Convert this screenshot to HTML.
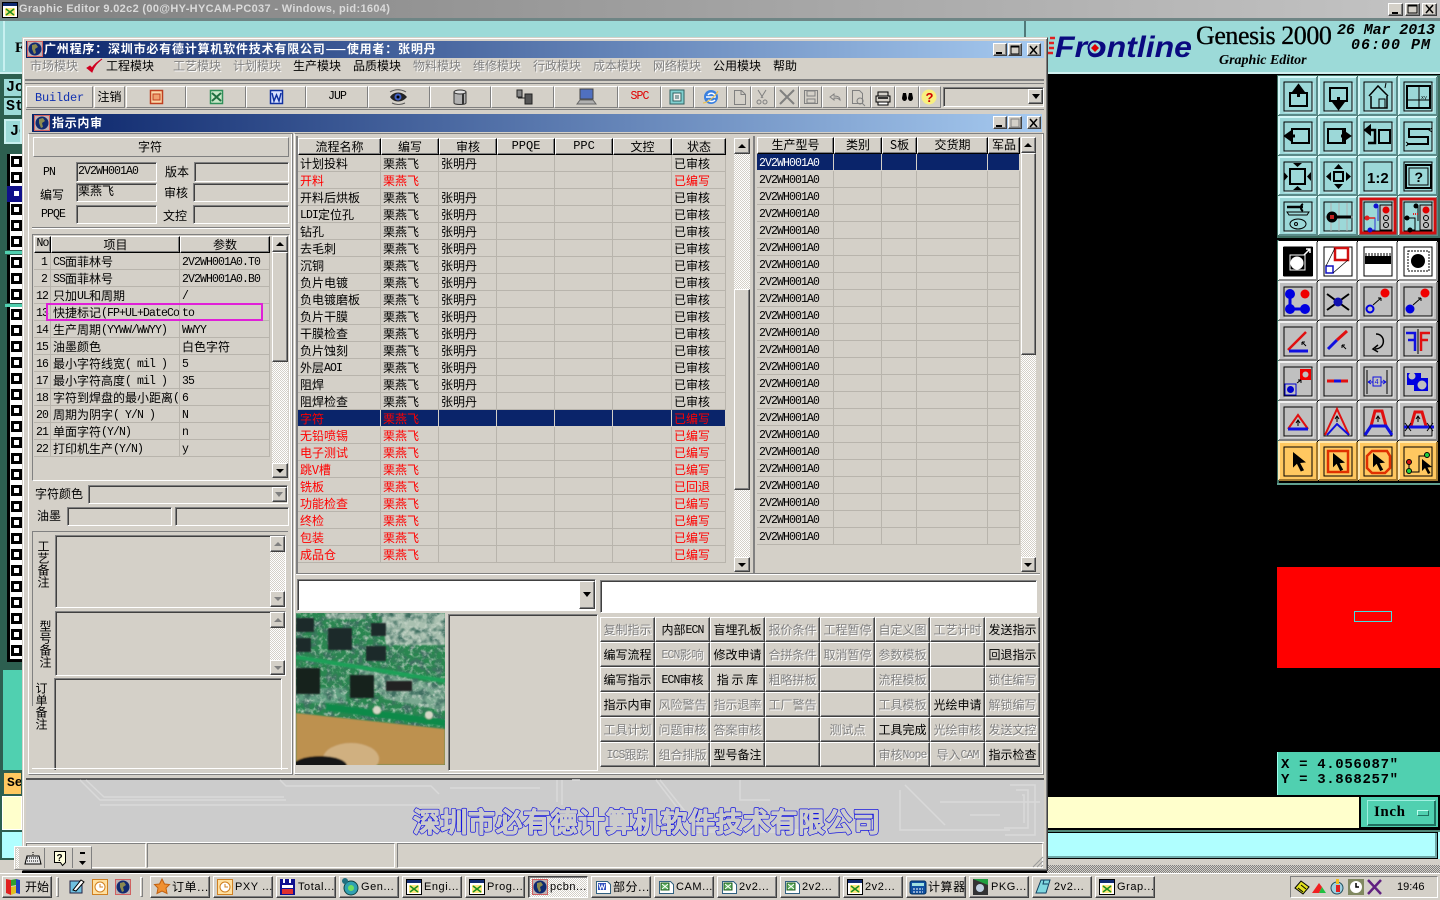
<!DOCTYPE html>
<html><head><meta charset="utf-8"><title>Graphic Editor</title>
<style>
*{box-sizing:border-box;margin:0;padding:0}
html,body{width:1440px;height:900px;overflow:hidden}
body{position:relative;background:#000;font:12px/14px "WenQuanYi Zen Hei","Noto Sans CJK SC",sans-serif;color:#000}
div{position:absolute;white-space:nowrap}
.f{background:#d4d0c8}
.r{background:#d4d0c8;border:1px solid;border-color:#fff #404040 #404040 #fff;box-shadow:inset -1px -1px #808080}
.s{border:1px solid;border-color:#808080 #fff #fff #808080;box-shadow:inset 1px 1px #404040}
.g{color:#808080;text-shadow:1px 1px #fff}
.m{font:11.5px/14px "Liberation Mono",monospace;letter-spacing:-.9px}
.c{display:flex;align-items:center;justify-content:center}
.h{background:repeating-conic-gradient(#fff 0 25%,#d4d0c8 0 50%) 0 0/2px 2px}
table{position:absolute;border-collapse:separate;border-spacing:0;table-layout:fixed}
td,th{height:17px;max-height:17px;overflow:hidden;white-space:nowrap;font-weight:normal;text-align:left;padding:1px 0 0 2px;border-right:1px solid #b8b4ac;border-bottom:1px solid #b8b4ac;line-height:15px;vertical-align:top}
th{text-align:center;padding:0;background:#d4d0c8;border:1px solid;border-color:#fff #000 #000 #fff;box-shadow:inset -1px -1px #808080}
td.m,table.m td{padding-top:4px;font:11.5px/12px "Liberation Mono",monospace;letter-spacing:-.9px}
td span.m{vertical-align:top;line-height:15px;position:relative;top:1px}
.red td{color:#f00}
.sel td{background:#0a246a;color:#f00;border-color:#d4d0c8}
table.m .w td{color:#fff}
.kg{left:600px;top:617px;display:grid;grid-template-columns:repeat(8,55px);grid-auto-rows:25px;width:440px}
.kg p{background:#d4d0c8;border:1px solid;border-color:#fff #404040 #404040 #fff;box-shadow:inset -1px -1px #808080;display:block;text-align:center;line-height:24px;white-space:nowrap;overflow:hidden;font-size:12px}
.kg p .m{vertical-align:top;line-height:25px}
.tb{top:876px;width:60px;height:22px;background:#d4d0c8;border:1px solid;border-color:#fff #404040 #404040 #fff;box-shadow:inset -1px -1px #808080;padding:3px 0 0 21px;font:11px/14px "Liberation Sans","WenQuanYi Zen Hei","Noto Sans CJK SC",sans-serif;letter-spacing:.55px;overflow:hidden}
.sq{left:7px;width:15px;height:16px;background:#fff;border-left:3px solid #000}
.sq::after{content:"";position:absolute;left:1px;top:2px;width:5px;height:5px;border:3px solid #000;background:#fff}
.sb{border-left-color:#10108a;background:#10108a}
.sb::after{border-color:#10108a}
.v{writing-mode:vertical-rl;white-space:nowrap;line-height:13px}
.tl{box-shadow:none;border-color:#fff #808080 #808080 #fff}
</style></head><body>

<!-- top title -->
<div style="left:0;top:0;width:1440px;height:18px;background:linear-gradient(90deg,#808080,#c4c4c4)"></div>
<div style="left:19px;top:2px;font:bold 11px/14px 'Liberation Sans',sans-serif;color:#dadada;letter-spacing:.33px">Graphic Editor 9.02c2 (00@HY-HYCAM-PC037 - Windows, pid:1604)</div>
<div class="r c" style="left:1388px;top:3px;width:15px;height:13px"></div>
<div class="r c" style="left:1405px;top:3px;width:15px;height:13px"></div>
<div class="r c" style="left:1422px;top:3px;width:15px;height:13px"></div>
<div style="left:0;top:18px;width:1440px;height:3px;background:#6f8585"></div>
<!-- teal header -->
<div style="left:0;top:21px;width:1440px;height:52px;background:#9cdad8"></div>
<div style="left:1024px;top:21px;width:2px;height:20px;background:#507878"></div>
<div style="left:0;top:72px;width:1440px;height:2px;background:#d0f0f0"></div>
<div style="left:3px;top:21px;width:2px;height:50px;background:#c8f0f0"></div>
<div style="left:15px;top:38px;font:bold 15px/20px 'Liberation Serif',serif">F</div>
<div style="left:0;top:74px;width:22px;height:800px;background:#2d5f50"></div>

<!-- left strip -->
<div style="left:3px;top:78px;width:19px;height:19px;background:#9cdad8;border:1px solid #2d5f50;font:bold 15px/17px 'Liberation Mono',monospace;overflow:hidden;padding-left:2px">Jo</div>
<div style="left:3px;top:97px;width:19px;height:19px;background:#9cdad8;border:1px solid #2d5f50;font:bold 15px/17px 'Liberation Mono',monospace;overflow:hidden;padding-left:2px">St</div>
<div style="left:4px;top:119px;width:18px;height:25px;background:#9cdad8;border:2px solid #c8f0f0;font:bold 15px/21px 'Liberation Mono',monospace;overflow:hidden;padding-left:4px">Jo</div>
<div class="sq" style="top:154px"></div><div class="sq" style="top:170px"></div><div class="sq sb" style="top:186px"></div><div class="sq" style="top:202px"></div><div class="sq" style="top:218px"></div><div class="sq" style="top:234px"></div>
<div style="left:5px;top:251px;width:17px;height:3px;background:#50d0b0"></div>
<div class="sq" style="top:255px"></div><div class="sq" style="top:271px"></div><div class="sq" style="top:287px"></div>
<div style="left:5px;top:304px;width:17px;height:3px;background:#50d0b0"></div>
<div class="sq" style="top:307px"></div><div class="sq" style="top:323px"></div><div class="sq" style="top:339px"></div><div class="sq" style="top:355px"></div><div class="sq" style="top:371px"></div><div class="sq" style="top:387px"></div><div class="sq" style="top:403px"></div><div class="sq" style="top:419px"></div><div class="sq" style="top:435px"></div><div class="sq" style="top:451px"></div><div class="sq" style="top:467px"></div><div class="sq" style="top:483px"></div><div class="sq" style="top:499px"></div><div class="sq" style="top:515px"></div><div class="sq" style="top:531px"></div><div class="sq" style="top:547px"></div><div class="sq" style="top:563px"></div><div class="sq" style="top:579px"></div><div class="sq" style="top:595px"></div><div class="sq" style="top:611px"></div><div class="sq" style="top:627px"></div><div class="sq" style="top:643px"></div>
<div style="left:7px;top:659px;width:15px;height:3px;background:#000"></div>
<div style="left:3px;top:670px;width:19px;height:100px;background:#50d0b0"></div>
<div style="left:3px;top:772px;width:19px;height:23px;background:#ffc860;border:1px solid #306050;font:bold 13px/20px 'Liberation Mono',monospace;padding-left:3px;overflow:hidden">Se</div>
<div style="left:2px;top:796px;width:20px;height:34px;background:#ffffcc;border:1px solid #fff"></div>
<div style="left:2px;top:832px;width:20px;height:26px;background:#b0ffff"></div>
<div style="left:0;top:860px;width:22px;height:14px;background:#d4d0c8"></div>

<!-- right region -->
<div style="left:1047px;top:74px;width:393px;height:723px;background:#000"></div>
<div style="left:1277px;top:75px;width:163px;height:163px;background:#3f6f62"></div>
<div style="left:1277px;top:240px;width:2px;height:244px;background:#3f6f62"></div>
<div style="left:1277px;top:483px;width:163px;height:2px;background:#60a090"></div>
<div style="left:1277px;top:567px;width:163px;height:101px;background:#f00"></div>
<div style="left:1354px;top:611px;width:38px;height:11px;border:1px solid #40e0e0"></div>
<div style="left:1277px;top:752px;width:163px;height:43px;background:#50d0b0;border-left:1px solid #9fe"></div>
<div style="left:1281px;top:758px;font:bold 14px/15px 'Liberation Mono',monospace;letter-spacing:.65px">X = 4.056087"<br>Y = 3.868257"</div>
<div style="left:1047px;top:797px;width:312px;height:31px;background:#ffffcc"></div>
<div style="left:1359px;top:795px;width:81px;height:34px;background:#50d0b0;border:2px solid #000"></div>
<div style="left:1367px;top:800px;width:69px;height:26px;background:#50d0b0;border:1px solid;border-color:#a0f0e0 #207060 #207060 #a0f0e0;box-shadow:inset -1px -1px #207060"></div>
<div style="left:1374px;top:804px;font:bold 15px/16px 'Liberation Serif',serif;letter-spacing:.6px">Inch</div>
<div style="left:1417px;top:810px;width:12px;height:6px;background:#50d0b0;border:1px solid;border-color:#c0fff0 #207060 #207060 #c0fff0"></div>
<div style="left:1047px;top:828px;width:393px;height:2px;background:#000"></div>
<div style="left:1047px;top:830px;width:393px;height:2px;background:#508878"></div>
<div style="left:1047px;top:832px;width:391px;height:27px;background:#b0ffff;border:1px solid #000;border-left:0;box-shadow:inset -2px -2px #70a8a8"></div>
<div style="left:1438px;top:832px;width:2px;height:27px;background:#b0ffff"></div>
<div style="left:1047px;top:859px;width:393px;height:7px;background:#d4d0c8"></div>
<div class="h" style="left:1047px;top:865px;width:393px;height:8px;background:repeating-conic-gradient(#808080 0 25%,#d4d0c8 0 50%) 0 0/2px 2px"></div>

<div style="left:1196px;top:21px;font:26px/30px 'Liberation Serif',serif;letter-spacing:-.45px;-webkit-text-stroke:.3px #000">Genesis 2000</div>
<div style="left:1219px;top:53px;font:italic bold 14px/16px 'Liberation Serif',serif">Graphic Editor</div>
<div style="left:1337px;top:23px;font:italic bold 15px/16px 'Liberation Mono',monospace;letter-spacing:-.1px">26 Mar 2013</div>
<div style="left:1351px;top:38px;font:italic bold 15px/16px 'Liberation Mono',monospace;letter-spacing:1px">06:00 PM</div>

<!-- main window -->
<div class="f" style="left:22px;top:37px;width:1026px;height:834px;border:1px solid;border-color:#d4d0c8 #404040 #404040 #d4d0c8;box-shadow:inset 1px 1px #fff,inset -1px -1px #808080"></div>
<div style="left:26px;top:41px;width:1018px;height:17px;background:linear-gradient(90deg,#0a246a,#a6caf0)"></div>
<div style="left:44px;top:42px;color:#fff;font-weight:bold;letter-spacing:.8px;font-size:12px">广州程序：深圳市必有德计算机软件技术有限公司——使用者：张明丹</div>
<div class="r" style="left:993px;top:43px;width:14px;height:13px"></div><div class="r" style="left:1008px;top:43px;width:14px;height:13px"></div><div class="r" style="left:1027px;top:43px;width:14px;height:13px"></div>
<!-- menu -->
<div class="g" style="left:30px;top:59px">市场模块</div>
<div style="left:106px;top:59px">工程模块</div>
<div class="g" style="left:173px;top:59px">工艺模块</div>
<div class="g" style="left:233px;top:59px">计划模块</div>
<div style="left:293px;top:59px">生产模块</div>
<div style="left:353px;top:59px">品质模块</div>
<div class="g" style="left:413px;top:59px">物料模块</div>
<div class="g" style="left:473px;top:59px">维修模块</div>
<div class="g" style="left:533px;top:59px">行政模块</div>
<div class="g" style="left:593px;top:59px">成本模块</div>
<div class="g" style="left:653px;top:59px">网络模块</div>
<div style="left:713px;top:59px">公用模块</div>
<div style="left:773px;top:59px">帮助</div>
<div style="left:25px;top:79px;width:1019px;height:5px;border-top:2px solid #808080;border-bottom:1px solid #808080;background:#d4d0c8"></div>
<!-- toolbar -->
<div class="r tl" style="left:26px;top:86px;width:67px;height:22px"></div>
<div class="m" style="left:35px;top:91px;color:#1030b0;font-size:12px;letter-spacing:-.2px">Builder</div>
<div class="r c tl" style="left:94px;top:86px;width:31px;height:22px">注销</div>
<div class="r tl" style="left:126px;top:86px;width:60px;height:22px"></div>
<div class="r tl" style="left:186px;top:86px;width:60px;height:22px"></div>
<div class="r tl" style="left:246px;top:86px;width:60px;height:22px"></div>
<div class="r c m tl" style="left:306px;top:86px;width:62px;height:22px">JUP</div>
<div class="r tl" style="left:368px;top:86px;width:62px;height:22px"></div>
<div class="r tl" style="left:430px;top:86px;width:61px;height:22px"></div>
<div class="r tl" style="left:491px;top:86px;width:63px;height:22px"></div>
<div class="r tl" style="left:554px;top:86px;width:64px;height:22px"></div>
<div class="r c m tl" style="left:618px;top:86px;width:43px;height:22px;color:#e00000">SPC</div>
<div class="r tl" style="left:661px;top:86px;width:33px;height:22px"></div>
<div class="r tl" style="left:694px;top:86px;width:33px;height:22px"></div>
<div class="r tl" style="left:727px;top:86px;width:24px;height:22px"></div>
<div class="r tl" style="left:751px;top:86px;width:24px;height:22px"></div>
<div class="r tl" style="left:775px;top:86px;width:24px;height:22px"></div>
<div class="r tl" style="left:799px;top:86px;width:23px;height:22px"></div>
<div class="r tl" style="left:822px;top:86px;width:25px;height:22px"></div>
<div class="r tl" style="left:847px;top:86px;width:24px;height:22px"></div>
<div class="r tl" style="left:871px;top:86px;width:24px;height:22px"></div>
<div class="r tl" style="left:895px;top:86px;width:24px;height:22px"></div>
<div class="r tl" style="left:919px;top:86px;width:22px;height:22px"></div>
<div class="s" style="left:943px;top:87px;width:101px;height:20px"></div>
<div class="r" style="left:1028px;top:89px;width:15px;height:15px"></div>
<!-- child window -->
<div style="left:26px;top:109px;width:1018px;height:1px;background:#808080"></div>
<div style="left:32px;top:114px;width:1010px;height:18px;background:linear-gradient(90deg,#0a246a,#a6caf0)"></div>
<div style="left:52px;top:116px;color:#fff;font-weight:bold;letter-spacing:.7px">指示内审</div>
<div class="r" style="left:993px;top:116px;width:14px;height:13px"></div><div class="r" style="left:1008px;top:116px;width:14px;height:13px"></div><div class="r" style="left:1027px;top:116px;width:14px;height:13px"></div>

<!-- left panel -->
<div style="left:28px;top:133px;width:265px;height:642px;border:1px solid;border-color:#808080 #808080 #808080 #fff;box-shadow:inset -1px -1px #fff"></div>
<div class="r c tl" style="left:33px;top:137px;width:256px;height:20px;padding-right:22px">字符</div>
<div class="s" style="left:76px;top:162px;width:81px;height:20px"></div>
<div class="s" style="left:76px;top:183px;width:81px;height:19px"></div>
<div class="s" style="left:76px;top:205px;width:81px;height:19px"></div>
<div class="s" style="left:194px;top:162px;width:95px;height:20px"></div>
<div class="s" style="left:193px;top:183px;width:96px;height:19px"></div>
<div class="s" style="left:193px;top:205px;width:96px;height:19px"></div>
<div class="m" style="left:43px;top:166px">PN</div>
<div style="left:40px;top:188px">编写</div>
<div class="m" style="left:41px;top:208px">PPQE</div>
<div style="left:165px;top:165px">版本</div>
<div style="left:164px;top:186px">审核</div>
<div style="left:163px;top:209px">文控</div>
<div class="m" style="left:78px;top:165px">2V2WH001A0</div>
<div style="left:78px;top:184px">栗燕飞</div>
<div style="left:32px;top:227px;width:258px;height:2px;border-top:1px solid #808080;border-bottom:1px solid #fff"></div>
<div style="left:32px;top:234px;width:258px;height:247px;border:1px solid;border-color:#808080 #fff #fff #808080"></div>

<table style="left:34px;top:236px;width:236px">
<col width="17"><col width="129"><col width="90">
<tr><th class="m">No</th><th>项目</th><th>参数</th></tr>
<tr><td style="text-align:right;padding-right:3px" class="m">1</td><td><span class="m">CS</span>面菲林号</td><td class="m">2V2WH001A0.T0</td></tr>
<tr><td style="text-align:right;padding-right:3px" class="m">2</td><td><span class="m">SS</span>面菲林号</td><td class="m">2V2WH001A0.B0</td></tr>
<tr><td class="m">12</td><td>只加<span class="m">UL</span>和周期</td><td class="m">/</td></tr>
<tr><td class="m">13</td><td>快捷标记<span class="m">(FP+UL+DateCo</span></td><td class="m">to</td></tr>
<tr><td class="m">14</td><td>生产周期<span class="m">(YYWW/WWYY)</span></td><td class="m">WWYY</td></tr>
<tr><td class="m">15</td><td>油墨颜色</td><td>白色字符</td></tr>
<tr><td class="m">16</td><td>最小字符线宽<span class="m">( mil )</span></td><td class="m">5</td></tr>
<tr><td class="m">17</td><td>最小字符高度<span class="m">( mil )</span></td><td class="m">35</td></tr>
<tr><td class="m">18</td><td>字符到焊盘的最小距离<span class="m">(</span></td><td class="m">6</td></tr>
<tr><td class="m">20</td><td>周期为阴字<span class="m">( Y/N )</span></td><td class="m">N</td></tr>
<tr><td class="m">21</td><td>单面字符<span class="m">(Y/N)</span></td><td class="m">n</td></tr>
<tr><td class="m">22</td><td>打印机生产<span class="m">(Y/N)</span></td><td class="m">y</td></tr>
</table>
<div class="h" style="left:272px;top:236px;width:16px;height:242px"></div>
<div class="r" style="left:272px;top:236px;width:16px;height:16px"></div>
<div class="r" style="left:272px;top:252px;width:16px;height:110px"></div>
<div class="r" style="left:272px;top:463px;width:16px;height:15px"></div>

<div style="left:35px;top:487px">字符颜色</div>
<div class="s" style="left:88px;top:485px;width:200px;height:19px"></div>
<div class="r" style="left:272px;top:487px;width:15px;height:15px"></div>
<div style="left:37px;top:509px">油墨</div>
<div class="s" style="left:67px;top:507px;width:105px;height:19px"></div>
<div class="s" style="left:175px;top:507px;width:114px;height:19px"></div>
<div style="left:32px;top:531px;width:256px;height:1px;background:#808080"></div>
<div style="left:32px;top:531px;width:1px;height:175px;background:#808080"></div>

<div class="v" style="left:37px;top:540px">工艺备注</div>
<div class="s" style="left:55px;top:535px;width:231px;height:73px"></div>
<div class="h" style="left:270px;top:536px;width:15px;height:71px"></div>
<div class="r" style="left:270px;top:536px;width:15px;height:16px"></div>
<div class="r" style="left:270px;top:591px;width:15px;height:16px"></div>

<div class="v" style="left:39px;top:620px">型号备注</div>
<div class="s" style="left:55px;top:611px;width:231px;height:65px"></div>
<div class="h" style="left:270px;top:612px;width:15px;height:63px"></div>
<div class="r" style="left:270px;top:612px;width:15px;height:16px"></div>
<div class="r" style="left:270px;top:660px;width:15px;height:15px"></div>

<div class="v" style="left:35px;top:682px">订单备注</div>
<div class="s" style="left:54px;top:678px;width:228px;height:92px;border-bottom:0"></div>
<div style="left:32px;top:768px;width:256px;height:1px;background:#fff"></div>

<!-- process table -->
<div style="left:294px;top:133px;width:750px;height:642px;border:1px solid;border-color:#808080 #808080 #808080 #fff;box-shadow:inset -1px -1px #fff"></div>
<div style="left:296px;top:136px;width:2px;height:437px;background:#808080"></div>
<table style="left:298px;top:138px;width:428px">
<col width="83"><col width="58"><col width="58"><col width="58"><col width="58"><col width="59"><col width="54">
<tr><th>流程名称</th><th>编写</th><th>审核</th><th class="m" style="font-size:12px;letter-spacing:0">PPQE</th><th class="m" style="font-size:12px;letter-spacing:0">PPC</th><th>文控</th><th>状态</th></tr>
<tr><td>计划投料</td><td>栗燕飞</td><td>张明丹</td><td></td><td></td><td></td><td>已审核</td></tr>
<tr class="red"><td>开料</td><td>栗燕飞</td><td></td><td></td><td></td><td></td><td>已编写</td></tr>
<tr><td>开料后烘板</td><td>栗燕飞</td><td>张明丹</td><td></td><td></td><td></td><td>已审核</td></tr>
<tr><td><span class="m">LDI</span>定位孔</td><td>栗燕飞</td><td>张明丹</td><td></td><td></td><td></td><td>已审核</td></tr>
<tr><td>钻孔</td><td>栗燕飞</td><td>张明丹</td><td></td><td></td><td></td><td>已审核</td></tr>
<tr><td>去毛刺</td><td>栗燕飞</td><td>张明丹</td><td></td><td></td><td></td><td>已审核</td></tr>
<tr><td>沉铜</td><td>栗燕飞</td><td>张明丹</td><td></td><td></td><td></td><td>已审核</td></tr>
<tr><td>负片电镀</td><td>栗燕飞</td><td>张明丹</td><td></td><td></td><td></td><td>已审核</td></tr>
<tr><td>负电镀磨板</td><td>栗燕飞</td><td>张明丹</td><td></td><td></td><td></td><td>已审核</td></tr>
<tr><td>负片干膜</td><td>栗燕飞</td><td>张明丹</td><td></td><td></td><td></td><td>已审核</td></tr>
<tr><td>干膜检查</td><td>栗燕飞</td><td>张明丹</td><td></td><td></td><td></td><td>已审核</td></tr>
<tr><td>负片蚀刻</td><td>栗燕飞</td><td>张明丹</td><td></td><td></td><td></td><td>已审核</td></tr>
<tr><td>外层<span class="m">AOI</span></td><td>栗燕飞</td><td>张明丹</td><td></td><td></td><td></td><td>已审核</td></tr>
<tr><td>阻焊</td><td>栗燕飞</td><td>张明丹</td><td></td><td></td><td></td><td>已审核</td></tr>
<tr><td>阻焊检查</td><td>栗燕飞</td><td>张明丹</td><td></td><td></td><td></td><td>已审核</td></tr>
<tr class="sel"><td>字符</td><td>栗燕飞</td><td></td><td></td><td></td><td></td><td>已编写</td></tr>
<tr class="red"><td>无铅喷锡</td><td>栗燕飞</td><td></td><td></td><td></td><td></td><td>已编写</td></tr>
<tr class="red"><td>电子测试</td><td>栗燕飞</td><td></td><td></td><td></td><td></td><td>已编写</td></tr>
<tr class="red"><td>跳V槽</td><td>栗燕飞</td><td></td><td></td><td></td><td></td><td>已编写</td></tr>
<tr class="red"><td>铣板</td><td>栗燕飞</td><td></td><td></td><td></td><td></td><td>已回退</td></tr>
<tr class="red"><td>功能检查</td><td>栗燕飞</td><td></td><td></td><td></td><td></td><td>已编写</td></tr>
<tr class="red"><td>终检</td><td>栗燕飞</td><td></td><td></td><td></td><td></td><td>已编写</td></tr>
<tr class="red"><td>包装</td><td>栗燕飞</td><td></td><td></td><td></td><td></td><td>已编写</td></tr>
<tr class="red"><td>成品仓</td><td>栗燕飞</td><td></td><td></td><td></td><td></td><td>已编写</td></tr>
</table>
<div class="h" style="left:734px;top:138px;width:16px;height:433px"></div>
<div class="r" style="left:734px;top:138px;width:16px;height:16px"></div>
<div class="r" style="left:734px;top:289px;width:16px;height:201px"></div>
<div class="r" style="left:734px;top:557px;width:16px;height:15px"></div>
<div style="left:753px;top:136px;width:2px;height:437px;background:#808080"></div>
<div style="left:296px;top:573px;width:744px;height:2px;border-top:1px solid #808080;border-bottom:1px solid #fff"></div>

<table style="left:757px;top:137px;width:263px" class="m">
<col width="77"><col width="48"><col width="35"><col width="71"><col width="32">
<tr><th style="font:12px/14px 'WenQuanYi Zen Hei','Noto Sans CJK SC',sans-serif;letter-spacing:0">生产型号</th><th style="font:12px/14px 'WenQuanYi Zen Hei','Noto Sans CJK SC',sans-serif;letter-spacing:0">类别</th><th style="font:12px/14px 'WenQuanYi Zen Hei','Noto Sans CJK SC',sans-serif;letter-spacing:0">S板</th><th style="font:12px/14px 'WenQuanYi Zen Hei','Noto Sans CJK SC',sans-serif;letter-spacing:0">交货期</th><th style="font:12px/14px 'WenQuanYi Zen Hei','Noto Sans CJK SC',sans-serif;letter-spacing:0">军品</th></tr>
<tr class="sel w"><td>2V2WH001A0</td><td></td><td></td><td></td><td></td></tr>
<tr><td>2V2WH001A0</td><td></td><td></td><td></td><td></td></tr>
<tr><td>2V2WH001A0</td><td></td><td></td><td></td><td></td></tr>
<tr><td>2V2WH001A0</td><td></td><td></td><td></td><td></td></tr>
<tr><td>2V2WH001A0</td><td></td><td></td><td></td><td></td></tr>
<tr><td>2V2WH001A0</td><td></td><td></td><td></td><td></td></tr>
<tr><td>2V2WH001A0</td><td></td><td></td><td></td><td></td></tr>
<tr><td>2V2WH001A0</td><td></td><td></td><td></td><td></td></tr>
<tr><td>2V2WH001A0</td><td></td><td></td><td></td><td></td></tr>
<tr><td>2V2WH001A0</td><td></td><td></td><td></td><td></td></tr>
<tr><td>2V2WH001A0</td><td></td><td></td><td></td><td></td></tr>
<tr><td>2V2WH001A0</td><td></td><td></td><td></td><td></td></tr>
<tr><td>2V2WH001A0</td><td></td><td></td><td></td><td></td></tr>
<tr><td>2V2WH001A0</td><td></td><td></td><td></td><td></td></tr>
<tr><td>2V2WH001A0</td><td></td><td></td><td></td><td></td></tr>
<tr><td>2V2WH001A0</td><td></td><td></td><td></td><td></td></tr>
<tr><td>2V2WH001A0</td><td></td><td></td><td></td><td></td></tr>
<tr><td>2V2WH001A0</td><td></td><td></td><td></td><td></td></tr>
<tr><td>2V2WH001A0</td><td></td><td></td><td></td><td></td></tr>
<tr><td>2V2WH001A0</td><td></td><td></td><td></td><td></td></tr>
<tr><td>2V2WH001A0</td><td></td><td></td><td></td><td></td></tr>
<tr><td>2V2WH001A0</td><td></td><td></td><td></td><td></td></tr>
<tr><td>2V2WH001A0</td><td></td><td></td><td></td><td></td></tr>
</table>
<div class="h" style="left:1021px;top:137px;width:15px;height:434px"></div>
<div class="r" style="left:1021px;top:137px;width:15px;height:16px"></div>
<div class="r" style="left:1021px;top:153px;width:15px;height:202px"></div>
<div class="r" style="left:1021px;top:557px;width:15px;height:15px"></div>

<!-- lower right -->
<div class="s" style="left:297px;top:579px;width:299px;height:32px;background:#fff"></div>
<div class="r" style="left:579px;top:581px;width:16px;height:28px"></div>
<div class="s" style="left:600px;top:580px;width:437px;height:33px;background:#fff"></div>
<div class="s" style="left:448px;top:614px;width:150px;height:157px"></div>

<div class="kg">
<p class="g">复制指示</p><p>内部<span class="m">ECN</span></p><p>盲埋孔板</p><p class="g">报价条件</p><p class="g">工程暂停</p><p class="g">自定义图</p><p class="g">工艺计时</p><p>发送指示</p>
<p>编写流程</p><p class="g"><span class="m">ECN</span>影响</p><p>修改申请</p><p class="g">合拼条件</p><p class="g">取消暂停</p><p class="g">参数模板</p><p></p><p>回退指示</p>
<p>编写指示</p><p><span class="m">ECN</span>审核</p><p>指 示 库</p><p class="g">粗略拼板</p><p></p><p class="g">流程模板</p><p></p><p class="g">锁住编写</p>
<p>指示内审</p><p class="g">风险警告</p><p class="g">指示退率</p><p class="g">工厂警告</p><p></p><p class="g">工具模板</p><p>光绘申请</p><p class="g">解锁编写</p>
<p class="g">工具计划</p><p class="g">问题审核</p><p class="g">答案审核</p><p></p><p class="g">测试点</p><p>工具完成</p><p class="g">光绘审核</p><p class="g">发送文控</p>
<p class="g"><span class="m">ICS</span>跟踪</p><p class="g">组合排版</p><p>型号备注</p><p></p><p></p><p class="g">审核<span class="m">Nope</span></p><p class="g">导入<span class="m">CAM</span></p><p>指示检查</p>
</div>

<!-- banner -->
<div style="left:26px;top:778px;width:1018px;height:2px;background:#555"></div>
<div style="left:26px;top:780px;width:1018px;height:62px;background:#cccccc"></div>
<!-- status bar -->
<div style="left:26px;top:842px;width:1018px;height:1px;background:#fff"></div>
<div style="left:26px;top:843px;width:120px;height:25px;border:1px solid;border-color:#808080 #fff #fff #808080"></div>
<div style="left:147px;top:843px;width:248px;height:25px;border:1px solid;border-color:#808080 #fff #fff #808080"></div>
<div style="left:397px;top:843px;width:646px;height:25px;border:1px solid;border-color:#808080 #fff #fff #808080"></div>
<div class="r tl" style="left:14px;top:846px;width:78px;height:24px"></div>
<div class="h" style="left:16px;top:848px;width:3px;height:20px"></div>
<div style="left:44px;top:848px;width:1px;height:20px;background:#808080"></div>
<div style="left:72px;top:848px;width:1px;height:20px;background:#808080"></div>

<!-- taskbar -->
<div class="f" style="left:0;top:873px;width:1440px;height:27px;border-top:1px solid #fff"></div>
<div class="r" style="left:2px;top:876px;width:50px;height:22px;padding:3px 0 0 22px">开始</div>
<div class="r tl" style="left:56px;top:877px;width:3px;height:20px"></div>
<div class="r tl" style="left:140px;top:877px;width:3px;height:20px"></div>
<div class="tb" style="left:150px;font-size:12px">订单...</div>
<div class="tb" style="left:213px">PXY ...</div>
<div class="tb" style="left:276px">Total...</div>
<div class="tb" style="left:339px">Gen...</div>
<div class="tb" style="left:402px">Engi...</div>
<div class="tb" style="left:465px">Prog...</div>
<div class="tb" style="left:528px;background:repeating-conic-gradient(#fff 0 25%,#d4d0c8 0 50%) 0 0/2px 2px;border-color:#404040 #fff #fff #404040;box-shadow:inset 1px 1px #808080">pcbn...</div>
<div class="tb" style="left:591px;font-size:12px">部分...</div>
<div class="tb" style="left:654px">CAM...</div>
<div class="tb" style="left:717px">2v2...</div>
<div class="tb" style="left:780px">2v2...</div>
<div class="tb" style="left:843px">2v2...</div>
<div class="tb" style="left:906px;font-size:12px">计算器</div>
<div class="tb" style="left:969px">PKG...</div>
<div class="tb" style="left:1032px">2v2...</div>
<div class="tb" style="left:1095px">Grap...</div>
<div class="f" style="left:1290px;top:876px;width:148px;height:22px;border:1px solid;border-color:#808080 #fff #fff #808080"></div>
<div style="left:1397px;top:880px;font:11px/14px 'Liberation Sans',sans-serif">19:46</div>

<svg style="position:absolute;left:0;top:0" width="1440" height="900" viewBox="0 0 1440 900">
<defs>
<g id="glb"><rect x=".5" y=".5" width="15" height="15" fill="#c0b0b0" stroke="#d06060"/><circle cx="8" cy="8" r="6.500" fill="#102a70"/><path d="M5 4l4-1 2 3-3 2 1 4-2 1-2-5z" fill="#8a8a50"/></g>
<g id="win"><rect x=".5" y=".5" width="15" height="15" fill="#fff" stroke="#000"/><rect x="1" y="1" width="14" height="3" fill="#102a70"/><rect x="3" y="6" width="10" height="8" fill="#ffe880"/><path d="M4 7l8 6M12 7l-8 6" stroke="#209020" stroke-width="1.600"/></g>
<g id="xl"><path d="M1.500 2.500h11l3 3v9h-14z" fill="#fff" stroke="#306080"/><rect x="3" y="4" width="8" height="7" fill="#60b060" stroke="#206020"/><path d="M4 5l6 5M10 5l-6 5" stroke="#fff"/></g>
<g id="wd"><path d="M1.500 2.500h11l3 3v9h-14z" fill="#fff" stroke="#306080"/><rect x="3" y="4" width="8" height="7" fill="#3050c0"/><path d="M4 5l1.500 5 1.500-4 1.500 4 1.500-5" stroke="#fff" fill="none"/></g>
<g id="bt"><rect width="38" height="38" fill="#9cd8d8"/><path d="M0 38V0H38" fill="none" stroke="#d4f8f8" stroke-width="2"/><path d="M38 0V38H0" fill="none" stroke="#5a8a88" stroke-width="2"/><rect x="5" y="5" width="28" height="29" fill="none" stroke="#000"/><path d="M5.500 35H34V6" fill="none" stroke="#d4f8f8"/></g>
<g id="bg"><rect width="38" height="38" fill="#c0c0c0"/><path d="M0 38V0H38" fill="none" stroke="#f0f0f0" stroke-width="2"/><path d="M38 0V38H0" fill="none" stroke="#808080" stroke-width="2"/><rect x="5" y="5" width="28" height="29" fill="none" stroke="#000"/><path d="M5.500 35H34V6" fill="none" stroke="#eee"/></g>
<g id="by"><rect width="38" height="38" fill="#ffc860"/><path d="M0 38V0H38" fill="none" stroke="#ffe8b0" stroke-width="2"/><path d="M38 0V38H0" fill="none" stroke="#a07830" stroke-width="2"/><rect x="5" y="5" width="28" height="29" fill="none" stroke="#000"/></g>
<g id="bw"><rect width="38" height="38" fill="#fff"/><path d="M0 38V0H38" fill="none" stroke="#fff" stroke-width="2"/><path d="M38 0V38H0" fill="none" stroke="#909090" stroke-width="2"/><rect x="5" y="5" width="28" height="29" fill="#fff" stroke="#000"/></g>
<path id="cur" d="M0 0L0 12 3 9 6 15 8.500 14 5.500 8.500 10 8Z"/>
<filter id="bl"><feGaussianBlur stdDeviation=".9"/></filter>
<filter id="nz" x="0" y="0" width="100%" height="100%"><feTurbulence type="fractalNoise" baseFrequency=".22" numOctaves="3" seed="7"/><feColorMatrix values="0 0 0 0 .66  0 0 0 0 .74  0 0 0 0 .66  2 0 0 0 -.95"/></filter>
<filter id="nd" x="0" y="0" width="100%" height="100%"><feTurbulence type="fractalNoise" baseFrequency=".13" numOctaves="2" seed="3"/><feColorMatrix values="0 0 0 0 .05  0 0 0 0 .16  0 0 0 0 .12  0 3 0 0 -1.300"/></filter>
<clipPath id="brd"><path d="M0 0H149V116L0 100z"/></clipPath>
</defs>

<!-- title icon -->
<use href="#win" x="2" y="2"/>
<g fill="#000"><path d="M1392 12h6v2h-6z"/><path d="M1408 5h9v8h-9z" fill="none" stroke="#000"/><path d="M1408 5.500h9" stroke="#000" stroke-width="2"/><path d="M1426 5l7 8M1433 5l-7 8" stroke="#000" stroke-width="1.500"/></g>
<!-- Frontline -->
<path d="M1050 38h5M1049 43h5M1049 48h5M1048 53h5" stroke="#e02020" stroke-width="2.500"/>
<text x="1055" y="57" font-family="Liberation Sans" font-weight="bold" font-style="italic" font-size="30" fill="#0a0a80" textLength="137" lengthAdjust="spacingAndGlyphs">Frontline</text>
<circle cx="1095" cy="48" r="6.500" fill="#9cdad8" stroke="#0a0a80" stroke-width="2"/><path d="M1095 44l4 4-4 4-4-4z" fill="#e00000"/>

<!-- window icons -->
<use href="#glb" x="27" y="41"/><use href="#glb" x="34" y="115"/>
<g fill="none" stroke="#000"><path d="M996 53h6" stroke-width="2"/><rect x="1011" y="46" width="8" height="8"/><path d="M1011 46.500h8" stroke-width="2"/><path d="M1030 46l7 8M1037 46l-7 8" stroke-width="1.500"/><path d="M996 126h6" stroke-width="2"/><rect x="1011" y="119" width="8" height="8" stroke="#808080"/><path d="M1030 119l7 8M1037 119l-7 8" stroke-width="1.500"/></g>
<!-- checkmark -->
<path d="M87 68l5 4c2-6 5-9 10-13-5 3-8 6-10 9l-2-2z" fill="#d00020" stroke="#d00020"/>

<!-- toolbar icons -->
<rect x="150.500" y="90.500" width="12" height="13" fill="#fbd8a8" stroke="#c04020" stroke-width="1.500"/><rect x="153" y="94" width="7" height="6" fill="#f0a070" stroke="#c04020"/>
<rect x="210.500" y="90.500" width="12" height="13" fill="#c8e8c8" stroke="#30905a" stroke-width="1.500"/><path d="M212 93l9 8M221 93l-9 8" stroke="#207040" stroke-width="2"/>
<rect x="270.500" y="90.500" width="12" height="13" fill="#d8e0ff" stroke="#1030a0" stroke-width="1.500"/><path d="M272 93l2 8 2.500-6 2.500 6 2-8" fill="none" stroke="#1030a0" stroke-width="1.500"/>
<path d="M390 97c4-6 12-6 17 0-5 6-13 6-17 0z" fill="#222"/><path d="M390 92c5-3 11-3 16 0" stroke="#555" fill="none"/><path d="M392 103c4 2 9 2 13 0" stroke="#555" fill="none"/><circle cx="398" cy="97" r="3.500" fill="#4060c0"/><circle cx="398" cy="97" r="1.500" fill="#000"/>
<path d="M454 92v11c0 2 12 2 12 0V92z" fill="#b0b0b0" stroke="#333"/><ellipse cx="460" cy="92" rx="6" ry="2" fill="#e0e0e0" stroke="#333"/><path d="M463 94v10" stroke="#333" stroke-width="2"/>
<g stroke="#222" fill="#888"><rect x="517" y="90" width="5" height="7"/><rect x="525" y="94" width="7" height="10" fill="#555"/></g><path d="M518 98h7" stroke="#222"/>
<rect x="580" y="89" width="13" height="10" fill="#5070c0" stroke="#444"/><path d="M577 104l3-4h13l3 4z" fill="#b0b0b0" stroke="#666"/>
<rect x="670" y="90" width="14" height="14" fill="#80d0d0" stroke="#306060"/><path d="M673 93h8v8h-8z" fill="#f0f0f0" stroke="#306060"/><path d="M675 96h4M675 98h4" stroke="#306060"/>
<circle cx="711" cy="97" r="7" fill="#3a80e0"/><path d="M706 97h9c0-4-5-5-7-2M715 100c-2 2-5 2-7 0" stroke="#fff" fill="none" stroke-width="1.500"/><path d="M703 103c4 0 12-6 15-12" stroke="#f0c040" fill="none"/>
<g fill="none" stroke="#808080"><path d="M734.500 90.500h7l4 4v10h-11zM741 90.500v4h4"/><path d="M758 90l5 8M766 90l-5 8"/><circle cx="759" cy="102" r="2"/><circle cx="765" cy="102" r="2"/><path d="M780 90l14 14M794 90l-14 14" stroke-width="2"/><rect x="804.500" y="90.500" width="13" height="13"/><rect x="807" y="91" width="8" height="5"/><rect x="807" y="99" width="8" height="4"/><path d="M830 97l4-3v2c4 0 6 1 6 4-2-2-3-2-6-2v2z"/><path d="M852.500 90.500h7l3 3v10h-10zM860 98a3 3 0 1 0 .1 0M862 103l3 3"/></g>
<g stroke="#000" fill="none"><path d="M878 92h10v4h-10zM876 96h14v6h-14z" fill="#d4d0c8"/><path d="M878 102h10v3h-10z" fill="#fff"/><path d="M878 98h10" stroke-width="1.500"/></g>
<path d="M902 98a2.500 3 0 1 0 5 0l-1-5h-3zM908 98a2.500 3 0 1 0 5 0l-1-5h-3z" fill="#000"/>
<circle cx="929" cy="97" r="7.500" fill="#f8f080"/><text x="925.500" y="102" font-family="Liberation Sans" font-weight="bold" font-size="13" fill="#d00000">?</text>
<path d="M1032 94h8l-4 5z" fill="#000"/>

<!-- scroll arrows -->
<g fill="#000">
<path d="M276 246h8l-4-4z"/><path d="M276 469h8l-4 4z"/><path d="M738 148h8l-4-4z"/><path d="M738 563h8l-4 4z"/><path d="M1024 147h8l-4-4z"/><path d="M1024 563h8l-4 4z"/><path d="M275 492h8l-4 5z" fill="#808080"/>
</g>
<g fill="#808080"><path d="M274 546h8l-4-4z"/><path d="M274 597h8l-4 4z"/><path d="M274 622h8l-4-4z"/><path d="M274 666h8l-4 4z"/></g>
<path d="M583 592h8l-4 5z" fill="#000"/>

<!-- magenta annotation -->
<rect x="47" y="304" width="215" height="16" fill="none" stroke="#e020d8" stroke-width="2"/>

<!-- PCB photo -->
<svg x="296" y="613" width="149" height="152" viewBox="0 0 149 152">
<rect width="149" height="152" fill="#2a8650"/>
<g filter="url(#bl)">
<path d="M85 0h64v32H90z" fill="#a9c0b0"/><path d="M30 0h40v6H30z" fill="#8aa898"/>
<path d="M60 55l89 18v25l-60-12z" fill="#7aa890"/><path d="M0 75h50v15H0z" fill="#5f9f80"/>
</g>
<g clip-path="url(#brd)"><rect width="149" height="120" filter="url(#nd)"/><rect width="149" height="120" filter="url(#nz)"/></g>
<g filter="url(#bl)">
<rect x="0" y="5" width="18" height="14" fill="#1f2c2a"/><rect x="32" y="15" width="24" height="22" fill="#1c2a2a"/><rect x="75" y="10" width="15" height="13" fill="#1f2c2a"/><rect x="70" y="33" width="20" height="15" fill="#1c2a2a"/><rect x="0" y="25" width="15" height="14" fill="#1f2c2a"/><rect x="0" y="55" width="24" height="26" fill="#18201f"/><rect x="54" y="62" width="24" height="23" fill="#18241f"/><rect x="90" y="68" width="26" height="10" fill="#222"/>
<path d="M0 44l149 24" stroke="#1fa058" stroke-width="4"/><path d="M30 94l119 16" stroke="#108a48" stroke-width="7"/>
<path d="M0 100l149 16v36H0z" fill="#bd9150"/>
<ellipse cx="55" cy="146" rx="28" ry="16" fill="#d0b080"/>
<ellipse cx="24" cy="153" rx="27" ry="10" fill="#141414"/>
<circle cx="81" cy="97" r="4" fill="#d8d8c8"/><circle cx="133" cy="102" r="4" fill="#d8d8c8"/>
</g>
</svg>

<!-- banner lines -->
<g fill="none" stroke="#d9d9d9" stroke-width="1.500">
<path d="M80 780l20 20h186M86 780l18 17h180M100 805h340M280 780l6 6h145l8 8"/>
<path d="M450 788h90M557 780v22M562 780v25M572 780h8M660 780l40 50h140M656 780l40 52h144M740 780v20h30M900 790v40h110M905 785l40 40M940 802h100M1010 785h25v50h-30M1016 790h12v38h-24M1022 795h2v28M970 815h30"/>
</g>
<text x="413" y="832" font-family="Noto Sans CJK SC" font-weight="500" font-size="27" fill="#1414e0" stroke="#1414e0" stroke-width="3" stroke-linejoin="round" textLength="467">深圳市必有德计算机软件技术有限公司</text>
<text x="413" y="832" font-family="Noto Sans CJK SC" font-weight="500" font-size="27" fill="#cccccc" stroke="#cccccc" stroke-width="1.600" stroke-linejoin="round" textLength="467">深圳市必有德计算机软件技术有限公司</text>

<!-- status icons -->
<g stroke="#000" fill="#e8e8e8"><path d="M25 864l2-8h12l2 8z"/><path d="M27 858h12M27 861h12" stroke-dasharray="1 1"/><path d="M33 852v4" fill="none" stroke-dasharray="1 1"/></g>
<path d="M54.500 851.500h11v11l-3 3-2-3h-6z" fill="#ffffe0" stroke="#000"/><text x="56.500" y="861" font-family="Liberation Sans" font-weight="bold" font-size="10">?</text>
<path d="M80 853h5" stroke="#000" stroke-width="2"/><path d="M79 861h7l-3.500 4z" fill="#000"/>
<g stroke="#999"><path d="M1033 867l10-10M1037 867l6-6M1041 867l2-2"/></g>

<!-- task icons -->
<path d="M6 879l5 1v15l-5-2z" fill="#e02020"/><path d="M11 880l5-1v6l-5 1z" fill="#30a030"/><path d="M11 887l5-1v7l-5 2z" fill="#e0c020"/><path d="M16 879l4 1v14l-4-1z" fill="#2040c0"/>
<path d="M70 881h12v12H70z" fill="#70c0e0" stroke="#224"/><path d="M73 890l8-10 3 2-8 9z" fill="#fff" stroke="#000"/>
<rect x="92.500" y="879.500" width="15" height="15" fill="#ffe0a0" stroke="#d08020"/><circle cx="100" cy="887" r="5" fill="#fff" stroke="#d08020"/><path d="M100 884v3h3" stroke="#d08020" fill="none"/>
<use href="#glb" x="115" y="879"/>
<path d="M162 879l2.500 5 5 .5-3.500 3.500 1 5.500-5-2.500-5 2.500 1-5.500-3.500-3.500 5-.5z" fill="#f09030" stroke="#c06010"/>
<rect x="217.500" y="879.500" width="15" height="15" fill="#ffe0a0" stroke="#d08020"/><circle cx="225" cy="887" r="5" fill="#fff" stroke="#d08020"/><path d="M225 884v3h3" stroke="#d08020" fill="none"/>
<rect x="280" y="879" width="15" height="16" fill="#101090"/><path d="M283 879h2v4h-2zM289 879h2v4h-2z" fill="#fff"/><rect x="282" y="885" width="11" height="3" fill="#fff"/><rect x="282" y="889" width="11" height="5" fill="#e03030"/>
<circle cx="351" cy="888" r="7" fill="#30a0b0" stroke="#104040"/><circle cx="345" cy="881" r="3" fill="#207080"/><circle cx="351" cy="888" r="3" fill="#70e060"/>
<use href="#win" x="406" y="879"/><use href="#win" x="469" y="879"/><use href="#glb" x="532" y="879"/><use href="#wd" x="595" y="879"/><use href="#xl" x="658" y="879"/><use href="#xl" x="721" y="879"/><use href="#xl" x="784" y="879"/><use href="#win" x="847" y="879"/>
<rect x="910" y="881" width="16" height="13" rx="2" fill="#1050a0" stroke="#003060"/><rect x="912" y="883" width="12" height="3" fill="#a0e0e0"/><path d="M913 889h10M913 892h10" stroke="#fff" stroke-dasharray="2 1"/>
<rect x="973" y="879" width="15" height="16" fill="#333"/><path d="M973 879h15v6z" fill="#20a040"/><circle cx="980" cy="888" r="4" fill="#c0d0e0"/>
<path d="M1036 893l5-13h9l-4 13z" fill="#80d8e0" stroke="#104060"/><path d="M1044 880l-1 4h5" stroke="#104060" fill="none"/>
<use href="#win" x="1099" y="879"/>
<!-- tray -->
<path d="M1295 888l6-7 8 6-6 7z" fill="#e0e020" stroke="#000"/><path d="M1298 888l5 4M1301 885l5 4" stroke="#000"/>
<path d="M1312 893l7-10 3 4-3 6z" fill="#f02020"/><path d="M1319 893l3-6 4 6z" fill="#20c040"/>
<circle cx="1337" cy="888" r="6" fill="#a0d0e0" stroke="#205060"/><rect x="1336" y="879" width="3" height="5" fill="#f0c020"/><rect x="1336" y="885" width="4" height="7" fill="#e02020"/>
<rect x="1348" y="879" width="16" height="16" fill="#808860"/><circle cx="1356" cy="887" r="6" fill="#fff"/><path d="M1356 883v4h3" stroke="#000" fill="none" stroke-width="1.500"/>
<path d="M1368 880l13 14M1381 880l-13 14" stroke="#602080" stroke-width="2.500"/>

<!-- RIGHT PANEL row 1-4 -->
<use href="#bt" x="1279" y="77"/><use href="#bt" x="1319" y="77"/><use href="#bt" x="1359" y="77"/><use href="#bt" x="1399" y="77"/>
<use href="#bt" x="1279" y="117"/><use href="#bt" x="1319" y="117"/><use href="#bt" x="1359" y="117"/><use href="#bt" x="1399" y="117"/>
<use href="#bt" x="1279" y="157"/><use href="#bt" x="1319" y="157"/><use href="#bt" x="1359" y="157"/><use href="#bt" x="1399" y="157"/>
<use href="#bt" x="1279" y="197"/><use href="#bt" x="1319" y="197"/><use href="#bt" x="1359" y="197"/><use href="#bt" x="1399" y="197"/>
<g fill="none" stroke="#000" stroke-width="2">
<g transform="translate(1279,77)"><path d="M11 16h17v13H11z"/><path d="M15 14l4.500-6 4.500 6z" fill="#000"/><path d="M19.500 14v6" stroke-width="3"/></g>
<g transform="translate(1319,77)"><path d="M11 11h17v13H11z"/><path d="M15 26l4.500 6 4.500-6z" fill="#000"/><path d="M19.500 20v6" stroke-width="3"/></g>
<g transform="translate(1359,77)"><path d="M10 19l9-10 10 10M12 19v12h16V19" stroke-width="1.500"/><path d="M20 31v-9h6v9" stroke-width="1"/><path d="M26 11l1-5" stroke-width="1"/></g>
<g transform="translate(1399,77)"><rect x="8" y="9" width="23" height="22"/><path d="M8 23h23M20 9v22" stroke-width="1"/><text x="22" y="22" font-family="Liberation Mono" font-size="5" fill="#000" stroke="none">xy</text></g>
<g transform="translate(1279,117)"><path d="M13 12h17v14H13z"/><path d="M6 19l7-5v10z" fill="#000"/><path d="M11 19h5" stroke-width="3"/></g>
<g transform="translate(1319,117)"><path d="M9 12h17v14H9z"/><path d="M31 19l-7-5v10z" fill="#000"/><path d="M22 19h5" stroke-width="3"/></g>
<g transform="translate(1359,117)"><path d="M20 13h11v13H20z"/><path d="M8 13h8v13h-7" stroke-width="2.500"/><path d="M6 13l5-4v8z" fill="#000"/></g>
<g transform="translate(1399,117)"><path d="M31 12H10v8h19v7H8" stroke-width="2"/><path d="M33 11l-3 2 3 2M7 25l3 2-3 2" stroke-width="1"/></g>
<g transform="translate(1279,157)"><path d="M11 12h15v15H11z"/><g fill="#000" stroke="none"><path d="M14 6h9l-4.500 4zM14 33h9l-4.500-4zM5 15v9l4-4.500zM32 15v9l-4-4.500z"/></g></g>
<g transform="translate(1319,157)"><path d="M15 15h9v9h-9z"/><g fill="#000" stroke="none"><path d="M15 12h9l-4.500-5zM15 27h9l-4.500 5zM12 15v9l-5-4.500zM27 15v9l5-4.500z"/></g></g>
<text transform="translate(1367,183)" font-family="Liberation Sans" font-weight="bold" font-size="15" fill="#000" stroke="none">1:2</text>
<g transform="translate(1399,157)"><rect x="7" y="8" width="25" height="23"/><rect x="10" y="11" width="19" height="17" stroke-width="1"/><text x="15.500" y="25" font-family="Liberation Sans" font-weight="bold" font-size="14" fill="#000" stroke="none">?</text></g>
<g transform="translate(1279,197)"><path d="M8 10h16" stroke-width="2.500"/><path d="M24 7a4 4 0 0 0 0 7" stroke-width="2"/><path d="M8 15h22l-2 3H10z" stroke-width="1"/><ellipse cx="19" cy="27" rx="8" ry="5" stroke-width="1"/><circle cx="17" cy="27" r="1.500" stroke-width="1"/></g>
<g transform="translate(1319,197)"><path d="M6 20h28M20 6v28M12 6v28M28 6v28" stroke="#b0b0b0" stroke-width="1"/><circle cx="13" cy="20" r="5.500" fill="#000" stroke="none"/><rect x="11" y="18" width="4" height="4" fill="#c02020" stroke="none"/><path d="M18 20h14" stroke-width="3"/></g>
<g transform="translate(1359,197)"><rect x="2" y="2" width="34" height="34" stroke="#d01010" stroke-width="3"/><path d="M8 21h8v12h-5M17 9h2v15" stroke="#3030d0" stroke-width="1"/><path d="M8 21h8" stroke="#e02020" stroke-width="1.500"/><circle cx="8" cy="21" r="2.500" fill="#e02020" stroke="none"/><circle cx="17" cy="9" r="2.500" fill="#1010d0" stroke="none"/><circle cx="11" cy="33" r="2.500" fill="#1010d0" stroke="none"/><rect x="21" y="8" width="12" height="25" fill="#c0c0c0" stroke-width="1"/><circle cx="27" cy="13" r="3.500" fill="#e00000" stroke="none"/><circle cx="27" cy="21" r="2.500" stroke-width="1"/><circle cx="27" cy="28" r="2.500" stroke-width="1"/></g>
<g transform="translate(1399,197)"><rect x="2" y="2" width="34" height="34" stroke="#d01010" stroke-width="3"/><path d="M8 21h8v12h-5M17 9h2v15" stroke-width="1"/><path d="M14 17h6" stroke="#e02020" stroke-width="2" stroke-dasharray="1 1"/><circle cx="8" cy="21" r="2.500" fill="#000" stroke="none"/><circle cx="17" cy="9" r="2.500" fill="#000" stroke="none"/><circle cx="11" cy="33" r="2.500" fill="#000" stroke="none"/><rect x="21" y="8" width="12" height="25" fill="#c0c0c0" stroke-width="1"/><circle cx="27" cy="13" r="3.500" fill="#e00000" stroke="none"/><circle cx="27" cy="21" r="2.500" stroke-width="1"/><circle cx="27" cy="28" r="2.500" stroke-width="1"/></g>
</g>

<!-- white row -->
<use href="#bw" x="1279" y="242"/><use href="#bw" x="1319" y="242"/><use href="#bw" x="1359" y="242"/><use href="#bw" x="1399" y="242"/>
<g transform="translate(1279,242)"><rect x="4" y="5" width="30" height="29" fill="#000"/><rect x="11" y="13" width="15" height="15" fill="none" stroke="#fff"/><circle cx="18" cy="21" r="6.500" fill="#fff"/><path d="M25 13l6-6M27 7h4v4" stroke="#fff" fill="none" stroke-width="1.500"/></g>
<g transform="translate(1319,242)"><rect x="16" y="6" width="13" height="12" fill="#fff" stroke="#d01010" stroke-width="2.500"/><rect x="7" y="24" width="7" height="7" fill="#fff" stroke="#1010c0" stroke-width="1.500"/><path d="M7 24l9-18M14 31l15-13" stroke="#000" stroke-width=".7"/></g>
<g transform="translate(1359,242)"><rect x="6" y="14" width="26" height="8" fill="#000"/><path d="M7 14v-3M10 14v-3M13 14v-3M16 14v-3M19 14v-3M22 14v-3M25 14v-3M28 14v-3M31 14v-3" stroke="#000"/></g>
<g transform="translate(1399,242)"><rect x="9" y="9" width="21" height="20" fill="none" stroke="#000" stroke-dasharray="2 1"/><circle cx="19" cy="19" r="7" fill="#000"/></g>

<!-- grey rows -->
<use href="#bg" x="1279" y="282"/><use href="#bg" x="1319" y="282"/><use href="#bg" x="1359" y="282"/><use href="#bg" x="1399" y="282"/>
<use href="#bg" x="1279" y="322"/><use href="#bg" x="1319" y="322"/><use href="#bg" x="1359" y="322"/><use href="#bg" x="1399" y="322"/>
<use href="#bg" x="1279" y="362"/><use href="#bg" x="1319" y="362"/><use href="#bg" x="1359" y="362"/><use href="#bg" x="1399" y="362"/>
<use href="#bg" x="1279" y="402"/><use href="#bg" x="1319" y="402"/><use href="#bg" x="1359" y="402"/><use href="#bg" x="1399" y="402"/>
<g transform="translate(1279,282)"><path d="M11 12v15h15" stroke="#0000e0" stroke-width="3" fill="none"/><circle cx="11" cy="12" r="5" fill="#0000e0"/><circle cx="11" cy="27" r="5" fill="#0000e0"/><circle cx="26" cy="27" r="5" fill="#0000e0"/><circle cx="26" cy="12" r="4.500" fill="#f00000"/></g>
<g transform="translate(1319,282)"><path d="M8 12l22 16M30 12L8 28" stroke="#000" stroke-width="2"/><circle cx="19" cy="20" r="4.500" fill="#1010b0"/></g>
<g transform="translate(1359,282)"><circle cx="26" cy="11" r="4.500" fill="#f00000"/><circle cx="11" cy="27" r="3.500" fill="none" stroke="#0000e0" stroke-width="2"/><path d="M14 23l8-7M22 16h-3M22 16v3" stroke="#000" fill="none"/></g>
<g transform="translate(1399,282)"><circle cx="26" cy="11" r="4.500" fill="#f00000"/><circle cx="11" cy="27" r="4.500" fill="#0000e0"/><path d="M14 23l8-7M22 16h-3M22 16v3" stroke="#000" fill="none"/></g>
<g transform="translate(1279,322)"><path d="M9 28L27 10" stroke="#e01010" stroke-width="2.500"/><path d="M10 29h19" stroke="#1010e0" stroke-width="3"/><path d="M27 24l-4-4M23 20h3M23 20v3" stroke="#000" fill="none"/></g>
<g transform="translate(1319,322)"><path d="M9 27l9-9" stroke="#1010e0" stroke-width="3"/><path d="M18 18l10-9" stroke="#e01010" stroke-width="3"/><path d="M27 27l-4-4M23 23h3M23 23v3" stroke="#000" fill="none"/></g>
<g transform="translate(1359,322)"><path d="M17 12c10 0 10 15-1 15" stroke="#000" fill="none" stroke-width="1.500"/><path d="M19 23l-5 4 5 3" stroke="#000" fill="none" stroke-width="1.500"/></g>
<g transform="translate(1399,322)"><path d="M19 7v25" stroke="#000"/><path d="M7 11h9v18M9 18h7" stroke="#1010e0" stroke-width="2.500" fill="none"/><path d="M31 11h-9v18M22 18h7" stroke="#e01010" stroke-width="2.500" fill="none"/></g>
<g transform="translate(1279,362)"><rect x="21" y="7" width="11" height="11" fill="#f00000"/><circle cx="26.500" cy="12.500" r="3" fill="#c0c0c0"/><rect x="6" y="22" width="11" height="11" fill="none" stroke="#0000d0"/><circle cx="11.500" cy="27.500" r="3.500" fill="#0000d0"/><path d="M18 21l4-3M22 18h-3M22 18v3" stroke="#000" fill="none"/></g>
<g transform="translate(1319,362)"><path d="M8 19h21" stroke="#e01010" stroke-width="3"/><path d="M15 19h7" stroke="#1010e0" stroke-width="3"/></g>
<g transform="translate(1359,362)"><path d="M8 8v24M28 8v24" stroke="#000"/><path d="M9 20h18M9 20l3-2M9 20l3 2M27 20l-3-2M27 20l-3 2" stroke="#1010e0" fill="none"/><rect x="14" y="15" width="8" height="9" fill="#c0c0c0" stroke="#1010e0"/><text x="15.500" y="22" font-family="Liberation Mono" font-size="7" fill="#1010e0">4</text></g>
<g transform="translate(1399,362)"><path d="M8 11h14v5h7v13H15v-6H8z" fill="#0000e0"/><circle cx="13" cy="14" r="3.500" fill="#c0c0c0"/><circle cx="23" cy="23" r="4.500" fill="#c0c0c0"/></g>
<g transform="translate(1279,402)"><path d="M9 27l10-14 10 14" stroke="#e01010" stroke-width="2" fill="none"/><path d="M9 27h20" stroke="#1010e0" stroke-width="3"/><path d="M19 24v-5M17 21l2-3 2 3" stroke="#000" fill="none"/></g>
<g transform="translate(1319,402)"><path d="M6 33L18 7l12 26" stroke="#e01010" stroke-width="2" fill="none"/><path d="M8 33l10-11 12 11" stroke="#1010e0" stroke-width="2" fill="none"/><path d="M18 20v-5M16 17l2-3 2 3" stroke="#000" fill="none"/></g>
<g transform="translate(1359,402)"><path d="M12 24l4-15h7l4 15" stroke="#e01010" stroke-width="3" fill="none"/><path d="M6 33l6-9h15l6 9" stroke="#1010e0" stroke-width="3" fill="none"/><path d="M19 20v-5M17 17l2-3 2 3" stroke="#000" fill="none"/></g>
<g transform="translate(1399,402)"><path d="M12 24l4-14h7l4 14" stroke="#e01010" stroke-width="3" fill="none"/><path d="M5 25h30" stroke="#1010e0" stroke-width="3"/><path d="M6 21l6 8M12 21l-6 8M28 21l6 8M34 21l-6 8" stroke="#000"/><path d="M19 20v-5M17 17l2-3 2 3" stroke="#000" fill="none"/></g>

<!-- yellow row -->
<use href="#by" x="1279" y="442"/><use href="#by" x="1319" y="442"/><use href="#by" x="1359" y="442"/><use href="#by" x="1399" y="442"/>
<use href="#cur" transform="translate(1293,452) scale(1.300)" fill="#000"/>
<g transform="translate(1319,442)"><rect x="9" y="9" width="20" height="21" fill="none" stroke="#e03000" stroke-width="2.500"/><use href="#cur" transform="translate(14,11) scale(1.200)" fill="#000"/></g>
<g transform="translate(1359,442)"><path d="M13 9h15l3 5v12l-5 5H13l-5-5V14z" fill="none" stroke="#e03000" stroke-width="2.500"/><use href="#cur" transform="translate(14,11) scale(1.200)" fill="#000"/></g>
<g transform="translate(1399,442)"><path d="M10 21v9h10V14h8" stroke="#000" fill="none"/><circle cx="10" cy="20" r="2.500" fill="#d01010" stroke="#000"/><circle cx="10" cy="29" r="2.500" fill="#20d040" stroke="#000"/><circle cx="28" cy="13" r="2.500" fill="#20d040" stroke="#000"/><use href="#cur" x="23" y="17" fill="#000"/></g>
</svg>
</body></html>
